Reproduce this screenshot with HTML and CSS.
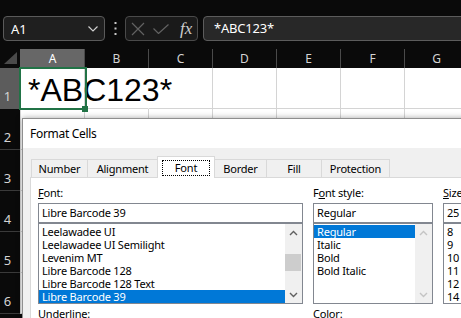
FILE: index.html
```html
<!DOCTYPE html>
<html lang="en">
<head>
  <meta charset="UTF-8" />
  <meta name="viewport" content="width=device-width, initial-scale=1" />
  <title>Format Cells</title>
  <link rel="stylesheet" href="styles.css">
</head>
<body>
  <div class="topbar">
    <div class="namebox">
      <span>A1</span>
      <svg width="10" height="6" viewBox="0 0 10 6"><path d="M0.5 0.5 L5 5 L9.5 0.5" fill="none" stroke="#cfcfcf" stroke-width="1.2"/></svg>
    </div>
    <div class="grip">
      <svg width="3" height="13" viewBox="0 0 3 13"><rect x="0.5" y="0" width="2" height="2" fill="#c8c8c8"/><rect x="0.5" y="5.5" width="2" height="2" fill="#c8c8c8"/><rect x="0.5" y="11" width="2" height="2" fill="#c8c8c8"/></svg>
    </div>
    <div class="fxbox">
      <svg class="ic-x" width="14" height="14" viewBox="0 0 14 14"><path d="M1 1 L13 13 M13 1 L1 13" fill="none" stroke="#626262" stroke-width="1.2"/></svg>
      <svg class="ic-ok" width="16" height="10" viewBox="0 0 16 10"><path d="M0.5 4.5 L5.5 9.5 L15.5 0.5" fill="none" stroke="#626262" stroke-width="1.2"/></svg>
      <span class="fx">fx</span>
    </div>
    <div class="formula">*ABC123*</div>
  </div>

  <div class="sheet">
    <div class="colheads">
      <div class="corner">
        <svg width="13" height="12" viewBox="0 0 13 12"><path d="M0 12 L13 0 L13 12 Z" fill="#4a4a4a"/></svg>
      </div>
      <div class="colhead sel">A</div>
      <div class="colhead">B</div>
      <div class="colhead">C</div>
      <div class="colhead">D</div>
      <div class="colhead">E</div>
      <div class="colhead">F</div>
      <div class="colhead">G</div>
    </div>

    <div class="row">
      <div class="rowhead sel">1</div>
      <div class="cell active"><span class="value">*ABC123*</span></div>
      <div class="cell"></div>
      <div class="cell nogrid"></div>
      <div class="cell"></div>
      <div class="cell"></div>
      <div class="cell"></div>
      <div class="cell"></div>
    </div>
    <div class="row">
      <div class="rowhead">2</div>
      <div class="cell"></div><div class="cell"></div><div class="cell"></div><div class="cell"></div><div class="cell"></div><div class="cell"></div><div class="cell"></div>
    </div>
    <div class="row">
      <div class="rowhead">3</div>
      <div class="cell"></div><div class="cell"></div><div class="cell"></div><div class="cell"></div><div class="cell"></div><div class="cell"></div><div class="cell"></div>
    </div>
    <div class="row">
      <div class="rowhead">4</div>
      <div class="cell"></div><div class="cell"></div><div class="cell"></div><div class="cell"></div><div class="cell"></div><div class="cell"></div><div class="cell"></div>
    </div>
    <div class="row">
      <div class="rowhead">5</div>
      <div class="cell"></div><div class="cell"></div><div class="cell"></div><div class="cell"></div><div class="cell"></div><div class="cell"></div><div class="cell"></div>
    </div>
    <div class="row">
      <div class="rowhead">6</div>
      <div class="cell"></div><div class="cell"></div><div class="cell"></div><div class="cell"></div><div class="cell"></div><div class="cell"></div><div class="cell"></div>
    </div>

    <div class="dialog">
      <div class="dlg-title">Format Cells</div>
      <div class="dlg-body">
        <div class="tabs">
          <div class="tab w-number">Number</div>
          <div class="tab w-align">Alignment</div>
          <div class="tab w-font sel"><span class="focus">Font</span></div>
          <div class="tab w-border">Border</div>
          <div class="tab w-fill">Fill</div>
          <div class="tab w-prot">Protection</div>
        </div>
        <div class="panel">
          <div class="col col-font">
            <div class="label"><u>F</u>ont:</div>
            <div class="input">Libre Barcode 39</div>
            <div class="list">
              <div class="items">
                <div class="item">Leelawadee UI</div>
                <div class="item">Leelawadee UI Semilight</div>
                <div class="item">Levenim MT</div>
                <div class="item">Libre Barcode 128</div>
                <div class="item">Libre Barcode 128 Text</div>
                <div class="item sel">Libre Barcode 39</div>
              </div>
              <div class="scroll">
                <div class="sbtn"><svg width="9" height="6" viewBox="0 0 9 6"><path d="M1 5 L4.5 1.5 L8 5" fill="none" stroke="#606060" stroke-width="1.4"/></svg></div>
                <div class="thumb"></div>
                <div class="sbtn down"><svg width="9" height="6" viewBox="0 0 9 6"><path d="M1 1 L4.5 4.5 L8 1" fill="none" stroke="#606060" stroke-width="1.4"/></svg></div>
              </div>
            </div>
            <div class="label below"><u>U</u>nderline:</div>
          </div>

          <div class="col col-style">
            <div class="label">F<u>o</u>nt style:</div>
            <div class="input">Regular</div>
            <div class="list">
              <div class="items">
                <div class="item sel">Regular</div>
                <div class="item">Italic</div>
                <div class="item">Bold</div>
                <div class="item">Bold Italic</div>
              </div>
              <div class="scroll">
                <div class="sbtn"><svg width="9" height="6" viewBox="0 0 9 6"><path d="M1 5 L4.5 1.5 L8 5" fill="none" stroke="#c4c4c4" stroke-width="1.4"/></svg></div>
                <div class="sbtn down"><svg width="9" height="6" viewBox="0 0 9 6"><path d="M1 1 L4.5 4.5 L8 1" fill="none" stroke="#c4c4c4" stroke-width="1.4"/></svg></div>
              </div>
            </div>
            <div class="label below"><u>C</u>olor:</div>
          </div>

          <div class="col col-size">
            <div class="label"><u>S</u>ize:</div>
            <div class="input">25</div>
            <div class="list">
              <div class="items">
                <div class="item">8</div>
                <div class="item">9</div>
                <div class="item">10</div>
                <div class="item">11</div>
                <div class="item">12</div>
                <div class="item">14</div>
              </div>
            </div>
          </div>
        </div>
      </div>
    </div>
  </div>
</body>
</html>
```

FILE: styles.css
```css
body {
  margin: 0;
  width: 461px;
  height: 318px;
  overflow: hidden;
  background: #0a0a0a;
  font-family: "Noto Sans", "Open Sans", sans-serif;
  color: #e6e6e6;
}

/* formula bar row */
.topbar {
  display: flex;
  align-items: center;
  height: 25px;
  padding: 16px 0 8px 3px;
}
.namebox {
  box-sizing: border-box;
  width: 102px;
  height: 25px;
  border: 1px solid #5a5a5a;
  border-radius: 4px;
  background: #1f1f1f;
  display: flex;
  align-items: center;
  justify-content: space-between;
  padding: 0 6px 0 7px;
  font-size: 13px;
  color: #fff;
}
.grip {
  width: 20px;
  display: flex;
  justify-content: center;
}
.fxbox {
  box-sizing: border-box;
  width: 73px;
  height: 25px;
  border: 1px solid #4a4a4a;
  border-radius: 4px;
  background: #1a1a1a;
  display: flex;
  align-items: center;
  padding-left: 5px;
}
.ic-ok { margin-left: 8px; }
.fx {
  margin-left: 11px;
  font-family: "Liberation Serif", serif;
  font-style: italic;
  font-size: 17px;
  color: #cfcfcf;
  line-height: 1;
}
.formula {
  box-sizing: border-box;
  flex: 1;
  height: 25px;
  margin: 0 -4px 0 5px;
  border: 1px solid #5c5c5c;
  border-radius: 4px;
  background: #282828;
  padding-left: 10px;
  line-height: 23px;
  font-size: 13px;
  letter-spacing: -0.2px;
  color: #fff;
}

/* grid */
.colheads {
  display: flex;
  height: 19px;
}
.corner {
  width: 20px;
  flex: none;
  display: flex;
  align-items: flex-end;
  justify-content: flex-end;
  padding-bottom: 4px;
  box-sizing: border-box;
  padding-right: 3px;
}
.colhead {
  box-sizing: border-box;
  flex: none;
  width: 64px;
  border-left: 1px solid #4a4a4a;
  text-align: center;
  font-size: 12px;
  line-height: 19px;
  color: #d4d4d4;
}
.colhead.sel {
  background: #676767;
  border-left-color: #676767;
  color: #fff;
}
.row {
  display: flex;
  height: 41px;
}
.rowhead {
  box-sizing: border-box;
  flex: none;
  width: 20px;
  border-bottom: 1px solid #3a3a3a;
  display: flex;
  align-items: flex-end;
  justify-content: center;
  padding: 0 5px 4px 0;
  font-size: 13px;
  line-height: 15px;
  color: #d4d4d4;
}
.rowhead.sel {
  background: #5c5c5c;
  border-bottom-color: #5c5c5c;
}
.cell {
  box-sizing: border-box;
  flex: none;
  width: 64px;
  min-width: 0;
  background: #fff;
  border-left: 1px solid #d4d4d4;
  border-bottom: 1px solid #d4d4d4;
}
.cell.nogrid { border-left-color: #fff; }
.cell.active {
  position: relative;
  display: flex;
  align-items: flex-end;
  padding-left: 7px;
}
.cell.active::after {
  content: "";
  position: absolute;
  top: -1px;
  left: -2px;
  right: -3px;
  bottom: -2px;
  border: 2px solid #217346;
  z-index: 2;
}
.cell.active::before {
  content: "";
  position: absolute;
  right: -4px;
  bottom: -4px;
  width: 6px;
  height: 6px;
  background: #217346;
  z-index: 3;
}
.value {
  position: relative;
  z-index: 1;
  white-space: nowrap;
  font-family: "Liberation Sans", Arial, sans-serif;
  font-size: 32px;
  line-height: 36px;
  color: #000;
}

/* dialog */
.dialog {
  position: absolute;
  left: 22px;
  top: 118px;
  width: 470px;
  height: 230px;
  background: #f0f0f0;
  border: 1px solid #8f8f8f;
  box-shadow: 0 0 6px rgba(0,0,0,0.35);
  color: #000;
  font-size: 11px;
  letter-spacing: -0.2px;
}
.dlg-title {
  height: 29px;
  line-height: 29px;
  background: #fff;
  padding-left: 7px;
  font-size: 12px;
  letter-spacing: -0.3px;
}
.dlg-body {
  padding: 8px 0 0 7px;
}
.tabs {
  position: relative;
  z-index: 1;
  display: flex;
  align-items: flex-end;
  height: 21px;
  margin-left: 1px;
}
.tab {
  box-sizing: border-box;
  flex: none;
  height: 18px;
  margin-left: -1px;
  border: 1px solid #d9d9d9;
  border-bottom: none;
  text-align: center;
  line-height: 17px;
}
.tab:first-child { margin-left: 0; }
.tab.sel {
  height: 22px;
  margin-bottom: -1px;
  padding-top: 3px;
  background: #fff;
  display: flex;
  justify-content: center;
  align-items: flex-start;
}
.focus {
  box-sizing: border-box;
  width: 48px;
  height: 16px;
  line-height: 14px;
  border: 1px dotted #000;
  text-align: center;
}
.w-number { width: 57px; }
.w-align { width: 71px; }
.w-font { width: 58px; }
.w-border { width: 53px; }
.w-fill { width: 56px; }
.w-prot { width: 69px; }

.panel {
  box-sizing: border-box;
  height: 200px;
  background: #fff;
  border: 1px solid #d9d9d9;
  padding: 7px 0 0 7px;
  display: flex;
  gap: 10px;
}
.col { flex: none; }
.col-font { width: 265px; }
.col-style { width: 120px; }
.col-size { width: 60px; }
.label {
  line-height: 15px;
  margin-bottom: 3px;
}
.label.below { margin-top: 2px; }
.input {
  box-sizing: border-box;
  height: 20px;
  border: 1px solid #828790;
  padding-left: 3px;
  line-height: 18px;
  white-space: nowrap;
}
.list {
  box-sizing: border-box;
  height: 81px;
  border: 1px solid #828790;
  display: flex;
}
.items {
  flex: 1;
  padding-top: 1px;
}
.item {
  line-height: 13px;
  padding-left: 3px;
  white-space: nowrap;
}
.item.sel {
  background: #0078d7;
  color: #fff;
}
.scroll {
  flex: none;
  width: 17px;
  background: #f0f0f0;
  display: flex;
  flex-direction: column;
}
.sbtn {
  height: 17px;
  display: flex;
  align-items: center;
  justify-content: center;
}
.sbtn.down { margin-top: auto; }
.thumb {
  height: 17px;
  margin: 13px 1px 0 0;
  background: #cdcdcd;
}
```
